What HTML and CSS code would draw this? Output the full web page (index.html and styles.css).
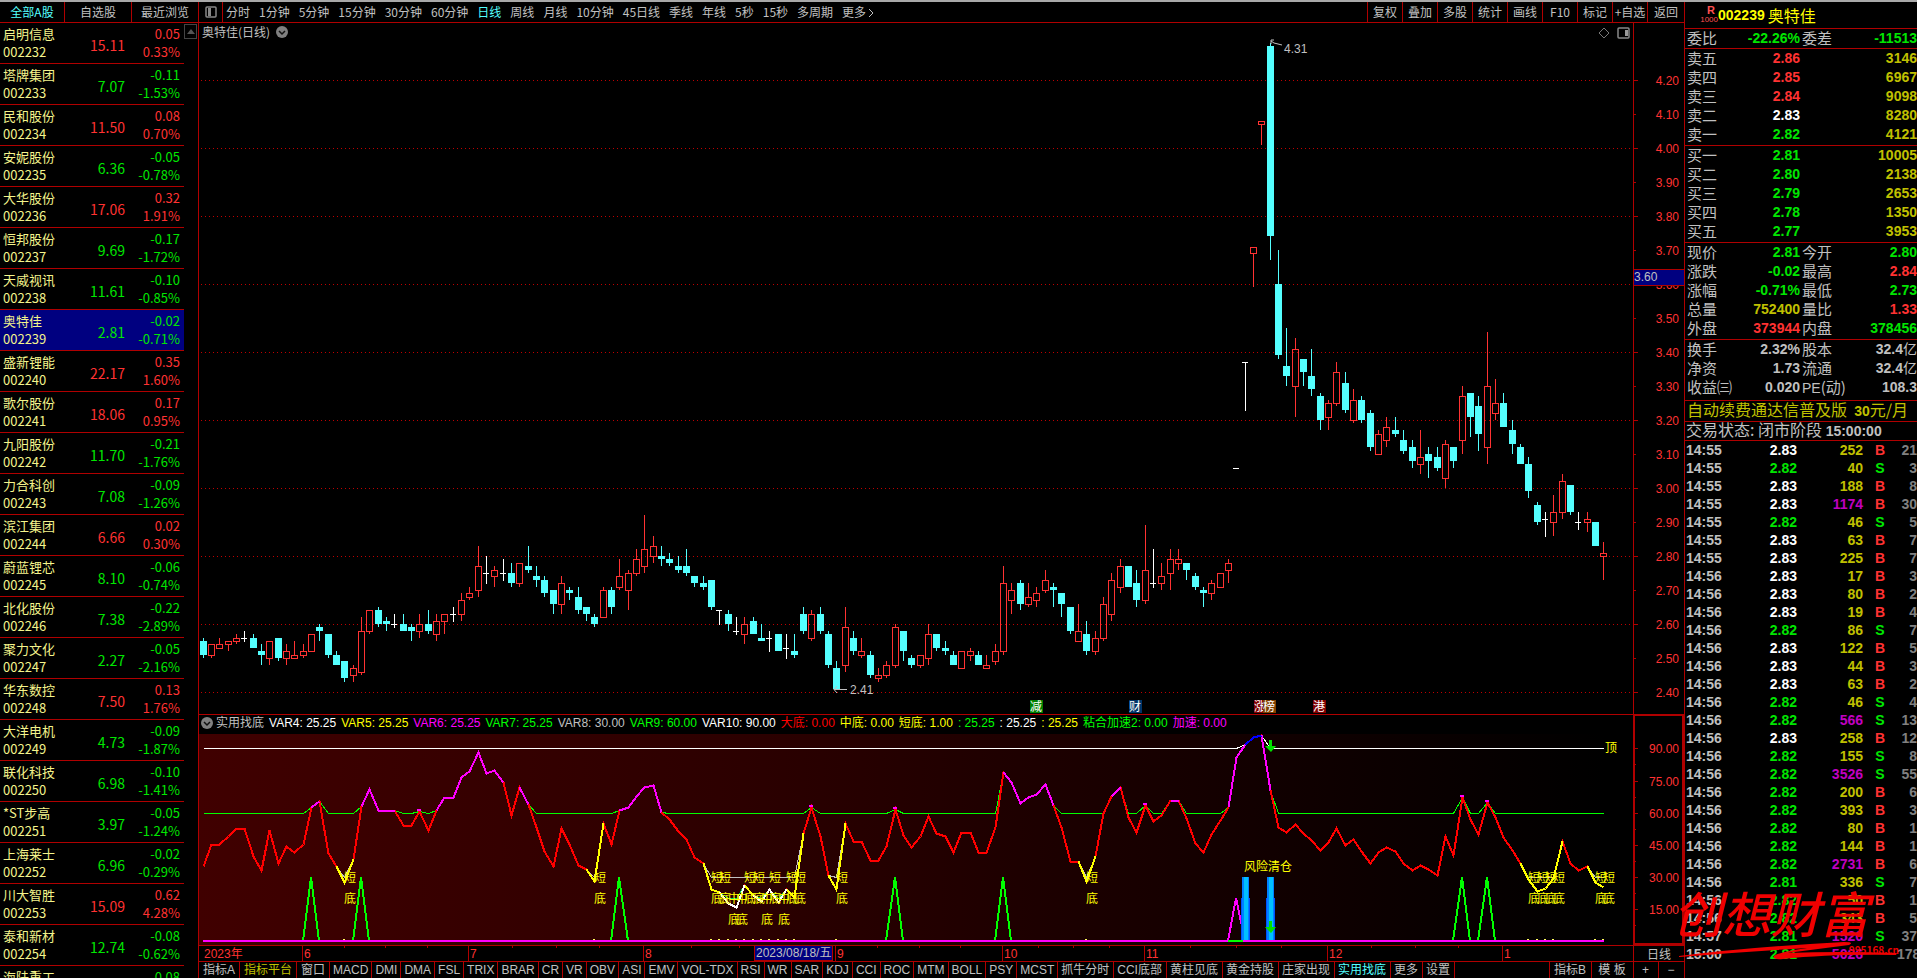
FILE: index.html
```html
<!DOCTYPE html>
<html lang="zh-CN">
<head>
    <meta charset="UTF-8">
    <meta name="viewport" content="width=device-width, initial-scale=1.0">
    <title>奥特佳 002239</title>
    <link rel="stylesheet" href="styles.css">
</head>
<body>
    <div class="app">
        <aside class="sidebar">
            <nav class="list-tabs">
                <button class="active">全部A股</button>
                <button>自选股</button>
                <button>最近浏览</button>
            </nav>
            <div class="list-body">
                <div class="stock-list" id="stock-list"></div>
                <div class="scrollbar">
                    <button aria-label="向上"><svg width="8" height="5"><path d="M0 5L4 0L8 5Z" fill="#555"/></svg></button>
                </div>
            </div>
        </aside>

        <main class="center">
            <header class="toolbar">
                <button class="panel-toggle" aria-label="侧栏">
                    <svg width="12" height="12"><rect x="1" y="1" width="10" height="10" rx="1" fill="none" stroke="#888" stroke-width="1.5"/><rect x="3" y="2" width="3" height="8" fill="#888"/></svg>
                </button>
                <nav class="periods">
                    <button>分时</button>
                    <button>1分钟</button>
                    <button>5分钟</button>
                    <button>15分钟</button>
                    <button>30分钟</button>
                    <button>60分钟</button>
                    <button class="active">日线</button>
                    <button>周线</button>
                    <button>月线</button>
                    <button>10分钟</button>
                    <button>45日线</button>
                    <button>季线</button>
                    <button>年线</button>
                    <button>5秒</button>
                    <button>15秒</button>
                    <button>多周期</button>
                    <button>更多<svg width="5" height="8"><path d="M0 0L4 4L0 8" fill="none" stroke="#c0c0c0"/></svg></button>
                </nav>
                <nav class="tools">
                    <button>复权</button>
                    <button>叠加</button>
                    <button>多股</button>
                    <button>统计</button>
                    <button>画线</button>
                    <button>F10</button>
                    <button>标记</button>
                    <button>+自选</button>
                    <button>返回</button>
                </nav>
            </header>

            <section class="main-chart">
                <div class="plot">
                    <svg id="kline" viewBox="0 0 1434 691" preserveAspectRatio="xMinYMin meet"></svg>
                    <div class="chart-title">
                        <span>奥特佳(日线)</span>
                        <svg width="12" height="12"><circle cx="6" cy="6" r="6" fill="#808080"/><path d="M3 5L6 8L9 5" fill="none" stroke="#111" stroke-width="1.5"/></svg>
                    </div>
                    <div class="chart-icons">
                        <svg width="12" height="12"><path d="M6 1L11 6L6 11L1 6Z" fill="none" stroke="#777"/></svg>
                        <svg width="14" height="12"><rect x="1" y="1" width="11" height="10" rx="1" fill="none" stroke="#888" stroke-width="1.5"/><rect x="8" y="3" width="3" height="6" fill="#999"/></svg>
                    </div>
                </div>
                <svg class="axis" id="price-axis" viewBox="0 0 51 691" preserveAspectRatio="xMinYMin meet"></svg>
            </section>

            <section class="indicator">
                <div class="plot">
                    <div class="indicator-head">
                        <svg width="12" height="12"><circle cx="6" cy="6" r="6" fill="#808080"/><path d="M3 5L6 8L9 5" fill="none" stroke="#111" stroke-width="1.5"/></svg>
                        <span class="silver">实用找底</span>
                        <span class="white">VAR4: 25.25</span>
                        <span class="yellow">VAR5: 25.25</span>
                        <span class="magenta">VAR6: 25.25</span>
                        <span class="lime">VAR7: 25.25</span>
                        <span class="silver">VAR8: 30.00</span>
                        <span class="lime">VAR9: 60.00</span>
                        <span class="white">VAR10: 90.00</span>
                        <span class="pure-red">大底: 0.00</span>
                        <span class="yellow">中底: 0.00</span>
                        <span class="yellow">短底: 1.00</span>
                        <span class="lime">: 25.25</span>
                        <span class="white">: 25.25</span>
                        <span class="yellow">: 25.25</span>
                        <span class="lime">粘合加速2: 0.00</span>
                        <span class="magenta">加速: 0.00</span>
                    </div>
                    <svg class="indicator-plot" id="trend" viewBox="0 0 1434 211" preserveAspectRatio="xMinYMin meet"></svg>
                </div>
                <div class="axis framed"><svg id="trend-axis" viewBox="0 0 47 227" preserveAspectRatio="xMinYMin meet"></svg></div>
            </section>

            <section class="timeline">
                <div class="plot"><svg id="time-axis" viewBox="0 0 1434 15" preserveAspectRatio="xMinYMin meet"></svg></div>
                <div class="axis period-name">日线</div>
            </section>

            <nav class="indicator-tabs">
                <button>指标A</button>
                <button class="gold">指标平台</button>
                <button>窗口</button>
                <button>MACD</button>
                <button>DMI</button>
                <button>DMA</button>
                <button>FSL</button>
                <button>TRIX</button>
                <button>BRAR</button>
                <button>CR</button>
                <button>VR</button>
                <button>OBV</button>
                <button>ASI</button>
                <button>EMV</button>
                <button>VOL-TDX</button>
                <button>RSI</button>
                <button>WR</button>
                <button>SAR</button>
                <button>KDJ</button>
                <button>CCI</button>
                <button>ROC</button>
                <button>MTM</button>
                <button>BOLL</button>
                <button>PSY</button>
                <button>MCST</button>
                <button>抓牛分时</button>
                <button>CCI底部</button>
                <button>黄柱见底</button>
                <button>黄金持股</button>
                <button>庄家出现</button>
                <button class="active">实用找底</button>
                <button>更多</button>
                <button>设置</button>
                <span class="spacer"></span>
                <button class="wide">指标B</button>
                <button class="wide">模 板</button>
                <button class="zoom-button">+</button>
                <button class="zoom-button">−</button>
            </nav>
        </main>

        <aside class="quote">
            <h1 class="quote-title">
                <span class="badge"><b>R</b><span>1000</span></span>
                <span class="code">002239</span>
                <span>奥特佳</span>
            </h1>
            <table class="quote-table ratio">
                <tr><th>委比</th><td class="green">-22.26%</td><th>委差</th><td class="green">-11513</td></tr>
            </table>
            <table class="quote-table">
                <tr><th>卖五</th><td class="red">2.86</td><th></th><td class="gold">3146</td></tr>
                <tr><th>卖四</th><td class="red">2.85</td><th></th><td class="gold">6967</td></tr>
                <tr><th>卖三</th><td class="red">2.84</td><th></th><td class="gold">9098</td></tr>
                <tr><th>卖二</th><td class="white">2.83</td><th></th><td class="gold">8280</td></tr>
                <tr><th>卖一</th><td class="green">2.82</td><th></th><td class="gold">4121</td></tr>
            </table>
            <table class="quote-table">
                <tr><th>买一</th><td class="green">2.81</td><th></th><td class="gold">10005</td></tr>
                <tr><th>买二</th><td class="green">2.80</td><th></th><td class="gold">2138</td></tr>
                <tr><th>买三</th><td class="green">2.79</td><th></th><td class="gold">2653</td></tr>
                <tr><th>买四</th><td class="green">2.78</td><th></th><td class="gold">1350</td></tr>
                <tr><th>买五</th><td class="green">2.77</td><th></th><td class="gold">3953</td></tr>
            </table>
            <table class="quote-table">
                <tr><th>现价</th><td class="green">2.81</td><th>今开</th><td class="green">2.80</td></tr>
                <tr><th>涨跌</th><td class="green">-0.02</td><th>最高</th><td class="red">2.84</td></tr>
                <tr><th>涨幅</th><td class="green">-0.71%</td><th>最低</th><td class="green">2.73</td></tr>
                <tr><th>总量</th><td class="gold">752400</td><th>量比</th><td class="red">1.33</td></tr>
                <tr><th>外盘</th><td class="red">373944</td><th>内盘</th><td class="green">378456</td></tr>
            </table>
            <table class="quote-table basics">
                <tr><th>换手</th><td>2.32%</td><th>股本</th><td>32.4<span class="unit">亿</span></td></tr>
                <tr><th>净资</th><td>1.73</td><th>流通</th><td>32.4<span class="unit">亿</span></td></tr>
                <tr><th>收益㈢</th><td>0.020</td><th><b>PE</b>(动)</th><td>108.3</td></tr>
            </table>
            <a class="promo" href="#">自动续费通达信普及版&nbsp; <b>30</b>元/月</a>
            <p class="status">交易状态: 闭市阶段 <b>15:00:00</b></p>
            <table class="ticks" id="ticks">
                <colgroup><col class="c-time"><col class="c-price"><col class="c-vol"><col class="c-side"><col></colgroup>
            </table>
        </aside>
    </div>

    <div class="brand">
        <span class="brand-name">创想财富</span>
        <svg width="220" height="20" viewBox="0 0 220 20">
            <path d="M0 15Q70 6 165 1Q176 1 170 4L108 12Q160 10 218 12L217 14Q150 13 104 18Q93 19 95 15Q100 11 128 7Q60 11 0 16Z" fill="#f00000"/>
        </svg>
        <span class="brand-url">995168.cn</span>
    </div>

    <script src="script.js"></script>
</body>
</html>
```

FILE: styles.css
```css
* {
    box-sizing: border-box;
}

body {
    margin: 0;
    height: 100vh;
    overflow: hidden;
    position: relative;
    background-color: #000;
    color: #c0c0c0;
    font-family: "Noto Sans CJK SC", sans-serif;
    font-size: 12px;
    line-height: 16px;
}

button {
    background: none;
    border: none;
    padding: 0;
    margin: 0;
    color: #c0c0c0;
    font: inherit;
    white-space: nowrap;
    cursor: pointer;
}

button.active {
    color: #54ffff;
}

svg {
    display: block;
}

svg text {
    font-family: "Liberation Sans", "Noto Sans CJK SC", sans-serif;
    font-size: 12px;
}

.red { color: #ff3232; }
.pure-red { color: #ff0000; }
.green { color: #00e600; }
.lime { color: #00ff00; }
.gold, button.gold { color: #c0c000; }
.yellow { color: #ffff00; }
.magenta { color: #ff00ff; }
.purple { color: #c000c0; }
.white { color: #fff; }
.silver { color: #c0c0c0; }

.app {
    display: grid;
    grid-template-columns: 199px 1fr 233px;
    height: 100vh;
    border-top: 2px solid #a8a8a8;
    overflow: hidden;
}

/* stock list */
.sidebar {
    display: flex;
    flex-direction: column;
    min-height: 0;
    border-right: 1px solid #b00000;
}

.list-tabs {
    display: grid;
    grid-template-columns: 64px 67px 1fr;
    height: 21px;
    border-bottom: 1px solid #b00000;
}

.list-tabs button + button {
    border-left: 1px solid #b00000;
}

.list-body {
    flex: 1;
    display: flex;
    min-height: 0;
}

.stock-list {
    flex: 1;
    overflow: hidden;
}

.stock {
    display: grid;
    grid-template-columns: 56px 66px 1fr;
    height: 41px;
    padding: 2px 4px 0 3px;
    border-bottom: 1px solid #b00000;
    font-size: 13px;
    line-height: 18px;
}

.stock.selected {
    background-color: #000080;
}

.stock .name {
    color: #f4f48c;
    white-space: nowrap;
}

.stock .price {
    padding-top: 11px;
    font-size: 14px;
    text-align: right;
}

.stock .change {
    text-align: right;
}

.scrollbar {
    width: 14px;
    padding-top: 1px;
}

.scrollbar button {
    display: flex;
    align-items: center;
    justify-content: center;
    width: 13px;
    height: 15px;
    border: 1px solid #444;
}

/* charts */
.center {
    display: grid;
    grid-template-rows: 21px 1fr 231px 16px 17px;
    min-width: 0;
    min-height: 0;
}

.toolbar {
    display: flex;
    border-bottom: 1px solid #b00000;
}

.panel-toggle {
    display: flex;
    align-items: center;
    justify-content: center;
    width: 24px;
    border-right: 1px solid #b00000;
}

.periods {
    flex: 1;
    display: flex;
    gap: 9px;
    padding-left: 3px;
    overflow: hidden;
}

.periods svg {
    display: inline-block;
    margin-left: 3px;
}

.tools {
    display: flex;
}

.tools button {
    width: 35px;
    border-left: 1px solid #b00000;
}

.tools button:last-child {
    width: 37px;
}

.main-chart,
.indicator,
.timeline {
    display: grid;
    grid-template-columns: 1fr 51px;
    min-height: 0;
}

.plot {
    position: relative;
    min-width: 0;
    min-height: 0;
}

.plot > svg {
    width: 100%;
    height: 100%;
}

.axis {
    width: 51px;
    border-left: 1px solid #b00000;
}

.main-chart .axis {
    height: 100%;
    border-left: none;
}

.chart-title {
    position: absolute;
    left: 3px;
    top: 1px;
    display: flex;
    align-items: center;
    gap: 6px;
}

.chart-icons {
    position: absolute;
    right: 2px;
    top: 4px;
    display: flex;
    gap: 7px;
}

.indicator .plot {
    display: flex;
    flex-direction: column;
    border-top: 1px solid #b00000;
}

.indicator-head {
    display: flex;
    align-items: center;
    gap: 5px;
    height: 19px;
    padding: 0 0 3px 2px;
    font-family: "Liberation Sans", "Noto Sans CJK SC", sans-serif;
    white-space: nowrap;
}

.indicator-head svg {
    margin-right: -2px;
}

.plot > .indicator-plot {
    flex: 1;
    min-height: 0;
    background: linear-gradient(to right, #400000, #2c0000 38%, #160000 68%, #000 98%);
}

.axis.framed {
    border: 2px solid #b00000;
}

.framed svg {
    width: 100%;
    height: 100%;
}

.timeline {
    border-top: 1px solid #b00000;
}

.period-name {
    text-align: center;
}

.indicator-tabs {
    display: flex;
    border-top: 1px solid #b00000;
    font-family: "Liberation Sans", "Noto Sans CJK SC", sans-serif;
    overflow: hidden;
}

.indicator-tabs button {
    padding: 0 4px 0 3px;
    border-right: 1px solid #b00000;
}

.indicator-tabs button:nth-child(-n+25) {
    padding: 0 3px;
}

.indicator-tabs button:nth-child(-n+3) {
    padding: 0 4px;
}

.indicator-tabs .spacer {
    flex: 1;
    border-right: 1px solid #b00000;
}

.indicator-tabs .wide {
    width: 42px;
}

.indicator-tabs .zoom-button {
    width: 25px;
}

.indicator-tabs .zoom-button:last-child {
    border-right: none;
}

/* quote panel */
.quote {
    border-left: 1px solid #b00000;
    overflow: hidden;
    white-space: nowrap;
}

.quote-title {
    display: flex;
    align-items: center;
    gap: 3px;
    height: 27px;
    margin: 0;
    padding: 0 0 1px 16px;
    border-bottom: 1px solid #b00000;
    color: #ffff00;
    font-size: 16px;
    font-weight: normal;
}

.quote-title .code {
    font: bold 14px "Liberation Sans", sans-serif;
}

.badge {
    display: flex;
    flex-direction: column;
    align-items: flex-end;
    color: #ff5050;
    font: 10px/10px "Liberation Sans Narrow", "Liberation Sans", sans-serif;
    margin-right: -3px;
    width: 17px;
}

.badge b {
    font-size: 11px;
    padding-right: 3px;
}

.badge span {
    font-size: 8px;
}

.quote-table,
.ticks {
    width: 100%;
    border-collapse: separate;
    border-spacing: 0;
    table-layout: fixed;
}

.quote-table {
    height: 97px;
    padding-bottom: 1px;
    border-bottom: 1px solid #b00000;
}

.quote-table.ratio {
    height: 20px;
    padding-bottom: 0;
}

.quote-table.basics {
    height: 61px;
    padding-bottom: 3px;
}

.quote-table th,
.quote-table td {
    height: 19px;
    padding: 0;
}

.quote-table th {
    width: 36px;
    padding-left: 2px;
    font-size: 15px;
    font-weight: normal;
    line-height: 17px;
    text-align: left;
    vertical-align: top;
}

.quote-table th b {
    font: 14px "Liberation Sans", sans-serif;
}

.quote-table td {
    font: bold 14px/19px "Liberation Sans", sans-serif;
    text-align: right;
}

.quote-table td:nth-child(2) {
    width: 79px;
}

.quote-table .unit {
    font: 14px/16px "Noto Sans CJK SC", sans-serif;
}

.promo {
    display: block;
    height: 21px;
    padding-left: 2px;
    border-bottom: 1px solid #b00000;
    color: #c0c000;
    font-size: 16px;
    line-height: 17px;
    text-decoration: none;
}

.status {
    height: 19px;
    margin: 0;
    padding-left: 1px;
    border-bottom: 1px solid #b00000;
    font-size: 16px;
    line-height: 15px;
}

.promo b,
.status b {
    font: bold 14px "Liberation Sans", sans-serif;
}

.ticks td {
    height: 18px;
    padding: 0;
    font: bold 14px/18px "Liberation Sans", sans-serif;
    text-align: right;
}

.ticks .c-time { width: 50px; }
.ticks .c-price { width: 62px; }
.ticks .c-vol { width: 66px; }
.ticks .c-side { width: 34px; }

.ticks td:first-child {
    padding-left: 1px;
    text-align: left;
}

.ticks td:nth-child(4) {
    text-align: center;
}

.ticks td:last-child {
    color: #808080;
}

/* brand stamp over the bottom right corner */
.brand {
    position: absolute;
    right: 18px;
    bottom: 17px;
    width: 226px;
    color: #f00000;
    pointer-events: none;
}

.brand svg {
    margin-left: auto;
}

.brand-name {
    display: block;
    font-size: 49px;
    font-weight: 500;
    font-style: italic;
    line-height: 58px;
}

.brand-url {
    position: absolute;
    right: 0;
    bottom: 3px;
    font-size: 10px;
    font-weight: bold;
}
```

FILE: script.js
```javascript
// name, code, price, change, percent
var stocks = [
    ['启明信息', '002232', '15.11', '0.05', '0.33%'],
    ['塔牌集团', '002233', '7.07', '-0.11', '-1.53%'],
    ['民和股份', '002234', '11.50', '0.08', '0.70%'],
    ['安妮股份', '002235', '6.36', '-0.05', '-0.78%'],
    ['大华股份', '002236', '17.06', '0.32', '1.91%'],
    ['恒邦股份', '002237', '9.69', '-0.17', '-1.72%'],
    ['天威视讯', '002238', '11.61', '-0.10', '-0.85%'],
    ['奥特佳', '002239', '2.81', '-0.02', '-0.71%'],
    ['盛新锂能', '002240', '22.17', '0.35', '1.60%'],
    ['歌尔股份', '002241', '18.06', '0.17', '0.95%'],
    ['九阳股份', '002242', '11.70', '-0.21', '-1.76%'],
    ['力合科创', '002243', '7.08', '-0.09', '-1.26%'],
    ['滨江集团', '002244', '6.66', '0.02', '0.30%'],
    ['蔚蓝锂芯', '002245', '8.10', '-0.06', '-0.74%'],
    ['北化股份', '002246', '7.38', '-0.22', '-2.89%'],
    ['聚力文化', '002247', '2.27', '-0.05', '-2.16%'],
    ['华东数控', '002248', '7.50', '0.13', '1.76%'],
    ['大洋电机', '002249', '4.73', '-0.09', '-1.87%'],
    ['联化科技', '002250', '6.98', '-0.10', '-1.41%'],
    ['*ST步高', '002251', '3.97', '-0.05', '-1.24%'],
    ['上海莱士', '002252', '6.96', '-0.02', '-0.29%'],
    ['川大智胜', '002253', '15.09', '0.62', '4.28%'],
    ['泰和新材', '002254', '12.74', '-0.08', '-0.62%'],
    ['海陆重工', '002255', '5.10', '-0.08', '-1.54%']
];

document.getElementById('stock-list').innerHTML = stocks.map(function (s) {
    var color = s[3][0] === '-' ? 'green' : 'red';
    return '<div class="stock' + (s[1] === '002239' ? ' selected' : '') + '">' +
        '<div class="name">' + s[0] + '<br>' + s[1] + '</div>' +
        '<div class="price ' + color + '">' + s[2] + '</div>' +
        '<div class="change ' + color + '">' + s[3] + '<br>' + s[4] + '</div></div>';
}).join('');

// time, price, volume, side, count
var ticks = [
    '14:55 2.83 252 B 21', '14:55 2.82 40 S 3', '14:55 2.83 188 B 8', '14:55 2.83 1174 B 30',
    '14:55 2.82 46 S 5', '14:55 2.83 63 B 7', '14:55 2.83 225 B 7', '14:56 2.83 17 B 3',
    '14:56 2.83 80 B 2', '14:56 2.83 19 B 4', '14:56 2.82 86 S 7', '14:56 2.83 122 B 5',
    '14:56 2.83 44 B 3', '14:56 2.83 63 B 2', '14:56 2.82 46 S 4', '14:56 2.82 566 S 13',
    '14:56 2.83 258 B 12', '14:56 2.82 155 S 8', '14:56 2.82 3526 S 55', '14:56 2.82 200 B 6',
    '14:56 2.82 393 B 3', '14:56 2.82 80 B 1', '14:56 2.82 144 B 1', '14:56 2.82 2731 B 6',
    '14:56 2.81 336 S 7', '14:56 2.82 50 B 1', '14:56 2.82 343 B 5', '14:57 2.81 1520 S 37',
    '15:00 2.81 5026 - 178'
];

document.getElementById('ticks').insertAdjacentHTML('beforeend', ticks.map(function (line) {
    var t = line.split(' ');
    return '<tr><td>' + t[0] + '</td>' +
        '<td class="' + (t[1] === '2.83' ? 'white' : 'green') + '">' + t[1] + '</td>' +
        '<td class="' + (+t[2] > 500 ? 'purple' : 'gold') + '">' + t[2] + '</td>' +
        '<td class="' + (t[3] === 'B' ? 'red' : 'green') + '">' + t[3].replace('-', '') + '</td>' +
        '<td>' + t[4] + '</td></tr>';
}).join(''));

// open, close, high, low in cents
var candles = [
    [255,251,256,250],[251,254,254,250],[253,254,256,253],[254,255,255,252],[255,256,257,254],[256,256,258,255],
    [256,253,257,253],[252,251,254,248],[250,255,255,248],[256,250,256,249],[250,252,254,248],[250,251,255,250],
    [251,252,254,250],[252,257,257,252],[259,258,260,255],[257,251,257,250],[251,248,252,248],[249,244,249,243],
    [245,247,248,243],[246,258,262,245],[258,264,264,257],[264,260,265,259],[261,260,262,258],[260,260,263,259],
    [260,258,263,258],[259,258,260,255],[258,260,263,256],[260,258,264,257],[257,261,263,255],[261,263,263,257],
    [263,263,265,261],[263,267,269,261],[268,269,271,267],[270,277,283,268],[275,275,280,272],[274,276,277,271],
    [275,275,279,273],[275,272,278,271],[272,278,278,271],[277,276,283,275],[274,273,277,271],[273,269,274,268],
    [270,266,270,263],[266,272,274,263],[270,269,271,267],[268,264,271,263],[265,263,265,261],[262,260,263,259],
    [262,270,271,262],[270,265,271,263],[271,274,279,270],[270,275,276,264],[275,279,282,274],[277,282,292,275],
    [280,283,286,278],[280,279,283,277],[279,278,281,277],[277,276,280,275],[277,275,282,274],[274,272,274,271],
    [272,271,274,270],[273,265,273,264],[264,264,264,260],[263,260,264,258],[258,258,262,257],[257,260,262,254],
    [261,257,262,257],[256,255,260,255],[256,256,258,252],[257,252,257,252],[253,253,257,250],[252,251,257,250],
    [263,258,265,257],[256,263,264,255],[263,258,265,257],[257,248,258,247],[247,241,249,241],[248,259,265,246],
    [256,252,258,251],[251,252,256,250],[251,245,252,244],[244,245,247,243],[245,248,249,244],[248,259,260,247],
    [258,252,258,249],[250,248,251,247],[248,251,251,247],[250,257,260,248],[257,253,257,252],[253,252,255,251],
    [251,248,252,248],[247,252,252,247],[251,252,253,249],[251,248,252,248],[247,248,251,247],[249,252,254,248],
    [252,272,277,251],[267,270,272,263],[272,266,273,264],[266,268,272,265],[267,269,271,265],[270,273,276,269],
    [271,270,272,265],[269,266,269,262],[265,258,265,257],[255,258,266,255],[257,252,261,251],[252,256,258,251],
    [256,266,268,255],[263,273,275,261],[271,277,279,269],[277,271,277,271],[272,267,276,265],[267,276,289,266],
    [272,272,282,271],[272,274,278,270],[275,279,282,270],[278,279,282,276],[278,276,278,273],[274,271,275,270],
    [270,269,271,265],[269,272,273,267],[271,275,275,271],[276,278,279,272],[306,306,306,306],[337,337,337,323],
    [369,371,371,359],[407,408,408,401],[430,374,431,367],[360,339,370,338],[336,333,347,330],[330,341,344,321],
    [338,334,338,330],[333,329,341,327],[327,320,328,317],[321,325,326,317],[325,334,337,324],[331,323,334,322],
    [320,326,329,319],[326,320,327,319],[322,312,323,311],[310,316,317,310],[314,318,321,312],[317,316,321,315],
    [314,311,317,310],[312,308,314,306],[307,309,317,304],[310,308,312,303],[309,306,312,305],[303,313,314,300],
    [312,308,312,306],[314,327,330,310],[328,321,328,315],[324,316,327,311],[312,330,346,307],[322,325,332,320],
    [325,318,328,318],[317,313,320,310],[312,307,313,307],[307,299,309,297],[295,290,296,289],[291,291,293,286],
    [290,293,298,286],[293,302,304,291],[301,293,301,292],[290,290,293,288],[290,291,293,287],[290,283,290,283],
    [280,281,284,273]
];

function xOf(i) {
    return 4 + Math.floor(i * 8.338);
}

function yOf(cents) {
    return Math.round(125 + (400 - cents) * 3.4);
}

function rect(x, y, w, h, fill) {
    return '<rect x="' + x + '" y="' + y + '" width="' + w + '" height="' + h + '" fill="' + fill + '"/>';
}

function text(x, y, fill, value, anchor) {
    return '<text x="' + x + '" y="' + y + '" fill="' + fill + '" text-anchor="' + (anchor || 'start') + '">' + value + '</text>';
}

function drawKline() {
    var out = '';
    for (var p = 240; p <= 420; p += 20) {
        out += '<line x1="2" x2="1432" y1="' + (yOf(p) + 0.5) + '" y2="' + (yOf(p) + 0.5) + '" stroke="#c00000" stroke-dasharray="1 3"/>';
    }
    candles.forEach(function (c, i) {
        var x = xOf(i), top = yOf(Math.max(c[0], c[1])), bottom = yOf(Math.min(c[0], c[1]));
        var high = yOf(c[2]), low = yOf(c[3]);
        if (c[0] === c[1]) {
            out += rect(x, high, 1, low - high + 1, '#fff') + rect(x - 3, top, 6, 1, '#fff');
        } else if (c[1] < c[0]) {
            out += rect(x, high, 1, low - high, '#54ffff') + rect(x - 3, top, 7, bottom - top, '#54ffff');
        } else {
            out += rect(x, high, 1, top - high, '#ff3232') + rect(x, bottom, 1, low - bottom, '#ff3232');
            out += '<rect x="' + (x - 2.5) + '" y="' + (top + 0.5) + '" width="6" height="' + Math.max(bottom - top, 3) + '" fill="none" stroke="#ff3232"/>';
        }
    });

    out += '<path d="M1072 18L1075 20L1083 22M1072 21V17M1072 17L1075 17" fill="none" stroke="#c0c0c0"/>' + text(1085, 30, '#c0c0c0', '4.31');
    out += '<path d="M648 666.5H635M638 663L635 666.5L638 670" fill="none" stroke="#c0c0c0"/>' + text(651, 671, '#c0c0c0', '2.41');

    [[831, '减', '#008000'], [930, '财', '#003468'], [1055, '涨', '#800000'], [1064, '榜', '#804000'], [1114, '港', '#800000']].forEach(function (m) {
        out += rect(m[0], 677, 13, 13, m[2]) + text(m[0] + 6, 688, '#fff', m[1], 'middle');
    });
    document.getElementById('kline').innerHTML = out;
}

function drawPriceAxis() {
    var out = rect(0, 0, 1, 691, '#b00000');
    for (var p = 240; p <= 420; p += 10) {
        out += rect(1, yOf(p), p % 20 ? 2 : 4, 1, '#b00000') + text(46, yOf(p) + 5, '#ff3232', (p / 100).toFixed(2), 'end');
    }
    out += rect(0, 246, 51, 17, '#b00000') + rect(1, 247, 50, 15, '#000080') + text(1, 258, '#c0c0c0', '3.60');
    document.getElementById('price-axis').innerHTML = out;
}

// indicator line, distance from the top of the plot
var trend = [
    132,110,110,102,94,94,122,136,96,129,112,118,110,73,67,119,132,148,125,72,55,76,76,76,91,91,77,96,76,63,
    63,43,37,18,39,36,48,81,53,70,93,117,132,94,110,131,135,147,89,110,76,73,62,53,51,78,85,97,105,123,
    129,155,158,169,173,151,161,167,155,168,155,163,99,73,102,141,155,89,107,107,126,126,112,75,101,113,102,82,99,102,
    118,98,98,118,118,93,38,48,69,63,60,50,71,93,127,127,147,122,79,62,53,83,98,71,87,81,66,66,84,109,
    118,100,86,73,23,10,3,1,56,93,98,90,99,106,116,108,94,111,105,117,129,118,113,117,129,136,131,135,141,102,
    121,63,85,100,68,83,103,116,129,145,157,154,144,107,129,136,132,148,153
];
var LEVEL_90 = 14, LEVEL_60 = 79, LEVEL_30 = 143, LEVEL_20 = 164, BASE = 207;

function line(from, to, color, width, level) {
    var points = [];
    for (var i = from; i <= to; i++) {
        var y = level ? Math.min(trend[i], level) : trend[i];
        points.push((xOf(i) + 0.5) + ',' + (y + 0.5));
    }
    return '<polyline points="' + points.join(' ') + '" fill="none" stroke="' + color + '" stroke-width="' + width + '"/>';
}

function spike(i, top, color) {
    return '<path d="M' + xOf(i - 1) + ' ' + BASE + 'L' + xOf(i) + ' ' + top + 'L' + xOf(i + 1) + ' ' + BASE + '" fill="none" stroke="' + color + '" stroke-width="2"/>';
}

function arrow(x, y) {
    return '<path d="M' + (x - 1) + ' ' + y + 'h3v6h4l-5 6l-6 -6h4z" fill="#00e000"/>';
}

function drawTrend() {
    var out = '<g shape-rendering="crispEdges">';
    out += line(0, 168, '#fff', 1, LEVEL_90) + line(0, 168, '#00ff00', 1, LEVEL_60);
    [[16, 18], [46, 48], [60, 72], [75, 77], [105, 107], [158, 163], [166, 168]].forEach(function (r) {
        out += line(r[0], r[1], '#c0c0c0', 1, LEVEL_30);
    });
    out += line(62, 71, '#00e060', 1, LEVEL_20);
    out += line(0, 168, '#ff0000', 2);
    [[13, 14], [19, 23], [28, 36], [38, 39], [50, 55], [96, 102], [109, 110], [116, 117], [123, 125], [127, 128]].forEach(function (r) {
        out += line(r[0], r[1], '#ff00ff', 2);
    });
    [26, 73, 83, 113, 151, 154].forEach(function (i) {
        out += rect(xOf(i) - 2, trend[i] - 2, 4, 2, '#ff00ff');
    });
    out += line(125, 127, '#0000ff', 2);
    [[16, 18], [46, 48], [60, 62], [65, 66], [70, 72], [75, 77], [105, 107], [158, 163], [166, 168]].forEach(function (r) {
        out += line(r[0], r[1], '#ffff00', 2);
    });
    out += line(62, 65, '#fff', 2) + line(66, 70, '#fff', 2);

    [13, 19, 50, 83, 96, 151, 154].forEach(function (i) {
        out += spike(i, LEVEL_30, '#00ff00');
    });
    out += spike(124, LEVEL_20, '#ff00ff');
    [125, 128].forEach(function (i) {
        var x = xOf(i);
        out += rect(x - 4, 164, 9, 42, '#0050ff') + rect(x - 3, 143, 7, 63, '#0080ff') + rect(x - 1, 143, 4, 63, '#00c0ff');
    });
    out += rect(4, 206, 1401, 2, '#ff00ff') + rect(1029, 206, 15, 2, '#00ff00') + '</g>';
    out += arrow(xOf(128), 6) + arrow(xOf(128), 187);

    [17, 47, 61, 62, 65, 66, 68, 70, 71, 76, 106, 159, 160, 161, 162, 167, 168].forEach(function (i) {
        out += text(xOf(i), 148, '#ffff00', '短') + text(xOf(i), 169, '#ffff00', '底') + rect(xOf(i) - 1, 205, 2, 1, '#ffff60');
    });
    [63, 64, 67, 69].forEach(function (i) {
        out += text(xOf(i), 169, '#ffff00', '中') + text(xOf(i), 190, '#ffff00', '底') + rect(xOf(i) - 1, 205, 2, 1, '#ffff60');
    });
    out += text(1045, 137, '#ffff00', '风险清仓') + text(1406, 18, '#ffff00', '顶');
    document.getElementById('trend').innerHTML = out;
}

function drawTrendAxis() {
    var out = '';
    [[90, 32], [75, 65], [60, 97], [45, 129], [30, 161], [15, 193]].forEach(function (t) {
        out += rect(0, t[1], 3, 1, '#b00000') + rect(0, t[1] + 16, 1, 1, '#b00000') + text(44, t[1] + 5, '#ff3232', t[0] + '.00', 'end');
    });
    document.getElementById('trend-axis').innerHTML = out;
}

function drawTimeAxis() {
    var out = text(5, 12, '#ff3232', '2023年');
    [[103, '6'], [269, '7'], [444, '8'], [636, '9'], [803, '10'], [945, '11'], [1128, '12'], [1303, '1']].forEach(function (m) {
        out += rect(m[0], 0, 1, 15, '#b00000') + text(m[0] + 2, 12, '#ff3232', m[1]);
    });
    [145, 186, 228, 313, 357, 400, 492, 540, 678, 720, 761, 839, 874, 910, 991, 1037, 1082, 1172, 1216, 1259].forEach(function (x) {
        out += rect(x, 0, 1, 2, '#b00000');
    });
    out += rect(555, 0, 79, 15, '#b00000') + rect(556, 0, 77, 14, '#000080') + text(557, 11, '#c0c0c0', '2023/08/18/五');
    document.getElementById('time-axis').innerHTML = out;
}

drawKline();
drawPriceAxis();
drawTrend();
drawTrendAxis();
drawTimeAxis();
```
